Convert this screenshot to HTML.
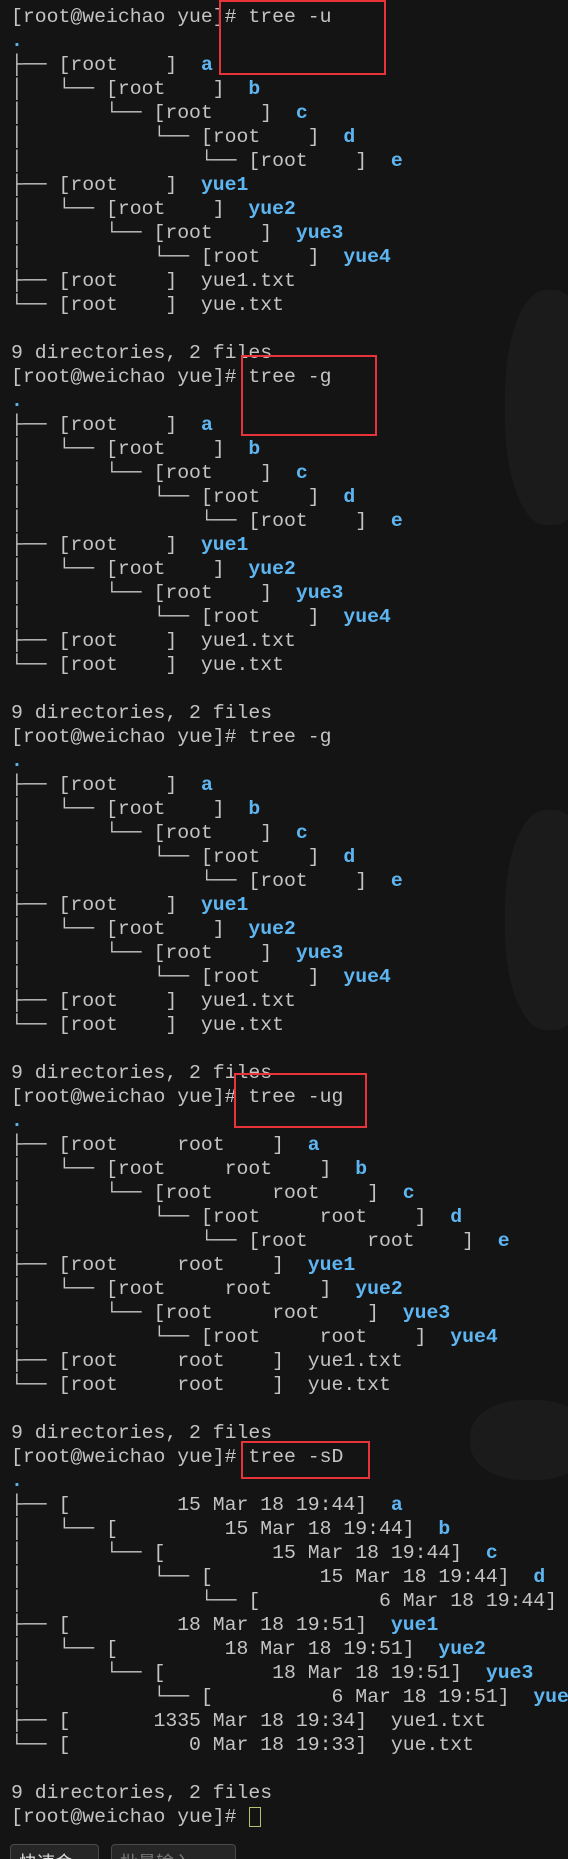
<!DOCTYPE html>
<html><head><meta charset="utf-8"><style>
html,body{margin:0;padding:0;background:#141414;width:568px;height:1859px;overflow:hidden;position:relative}
pre{position:absolute;left:11px;top:5px;margin:0;font-family:"Liberation Mono","DejaVu Sans Mono",monospace;font-size:19.8px;line-height:24px;color:#c4c4c4;white-space:pre}
b{color:#5db6f2;font-weight:bold}
.d{color:#5db6f2;font-weight:bold}
.box{position:absolute;border:2px solid #e8333a;box-sizing:border-box}
.cur{position:absolute;left:249px;top:1807px;width:12px;height:20px;border:1px solid #b8c070;box-sizing:border-box}
.btn{position:absolute;top:1844px;height:30px;border:1px solid #4a4a4a;border-radius:4px;background:#262626;font-family:"Liberation Sans","Noto Sans CJK SC",sans-serif;font-size:18px;color:#ddd;padding:4px 8px;box-sizing:border-box}
.deco{position:absolute;background:#1b1b1b;border-radius:45%}
</style></head><body>
<div class="deco" style="left:505px;top:290px;width:90px;height:235px"></div>
<div class="deco" style="left:505px;top:810px;width:90px;height:220px"></div>
<div class="deco" style="left:470px;top:1400px;width:120px;height:80px"></div>
<pre>[root@weichao yue]# tree -u
<span class="d">.</span>
├── [root    ]  <b>a</b>
│   └── [root    ]  <b>b</b>
│       └── [root    ]  <b>c</b>
│           └── [root    ]  <b>d</b>
│               └── [root    ]  <b>e</b>
├── [root    ]  <b>yue1</b>
│   └── [root    ]  <b>yue2</b>
│       └── [root    ]  <b>yue3</b>
│           └── [root    ]  <b>yue4</b>
├── [root    ]  yue1.txt
└── [root    ]  yue.txt

9 directories, 2 files
[root@weichao yue]# tree -g
<span class="d">.</span>
├── [root    ]  <b>a</b>
│   └── [root    ]  <b>b</b>
│       └── [root    ]  <b>c</b>
│           └── [root    ]  <b>d</b>
│               └── [root    ]  <b>e</b>
├── [root    ]  <b>yue1</b>
│   └── [root    ]  <b>yue2</b>
│       └── [root    ]  <b>yue3</b>
│           └── [root    ]  <b>yue4</b>
├── [root    ]  yue1.txt
└── [root    ]  yue.txt

9 directories, 2 files
[root@weichao yue]# tree -g
<span class="d">.</span>
├── [root    ]  <b>a</b>
│   └── [root    ]  <b>b</b>
│       └── [root    ]  <b>c</b>
│           └── [root    ]  <b>d</b>
│               └── [root    ]  <b>e</b>
├── [root    ]  <b>yue1</b>
│   └── [root    ]  <b>yue2</b>
│       └── [root    ]  <b>yue3</b>
│           └── [root    ]  <b>yue4</b>
├── [root    ]  yue1.txt
└── [root    ]  yue.txt

9 directories, 2 files
[root@weichao yue]# tree -ug
<span class="d">.</span>
├── [root     root    ]  <b>a</b>
│   └── [root     root    ]  <b>b</b>
│       └── [root     root    ]  <b>c</b>
│           └── [root     root    ]  <b>d</b>
│               └── [root     root    ]  <b>e</b>
├── [root     root    ]  <b>yue1</b>
│   └── [root     root    ]  <b>yue2</b>
│       └── [root     root    ]  <b>yue3</b>
│           └── [root     root    ]  <b>yue4</b>
├── [root     root    ]  yue1.txt
└── [root     root    ]  yue.txt

9 directories, 2 files
[root@weichao yue]# tree -sD
<span class="d">.</span>
├── [         15 Mar 18 19:44]  <b>a</b>
│   └── [         15 Mar 18 19:44]  <b>b</b>
│       └── [         15 Mar 18 19:44]  <b>c</b>
│           └── [         15 Mar 18 19:44]  <b>d</b>
│               └── [          6 Mar 18 19:44]  <b>e</b>
├── [         18 Mar 18 19:51]  <b>yue1</b>
│   └── [         18 Mar 18 19:51]  <b>yue2</b>
│       └── [         18 Mar 18 19:51]  <b>yue3</b>
│           └── [          6 Mar 18 19:51]  <b>yue4</b>
├── [       1335 Mar 18 19:34]  yue1.txt
└── [          0 Mar 18 19:33]  yue.txt

9 directories, 2 files
[root@weichao yue]# </pre>
<div class="box" style="left:219px;top:0;width:167px;height:75px"></div>
<div class="box" style="left:241px;top:355px;width:136px;height:81px"></div>
<div class="box" style="left:234px;top:1073px;width:133px;height:55px"></div>
<div class="box" style="left:241px;top:1441px;width:129px;height:38px"></div>
<div class="cur"></div>
<div class="btn" style="left:10px;width:89px">快速命令</div>
<div class="btn" style="left:111px;width:125px;color:#777">批量输入</div>
</body></html>
